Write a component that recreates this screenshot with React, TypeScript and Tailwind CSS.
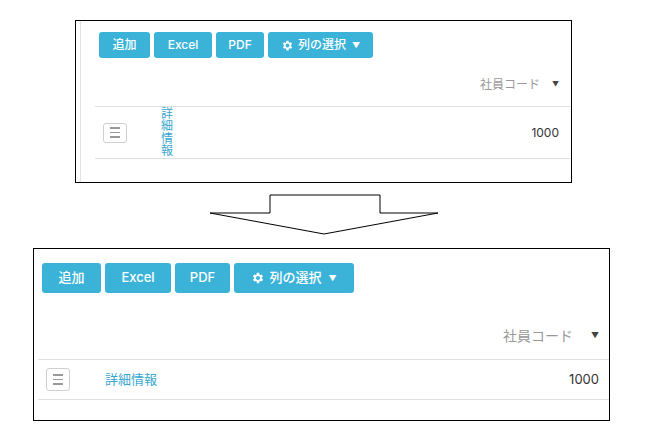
import React from "react";

const F = { fontFamily: "Inter, 'Noto Sans CJK JP', sans-serif" };

function Gear({ s }: { s: number }) {
  return (
    <svg width={s} height={s} viewBox="0 0 24 24" fill="white">
      <path d="M19.4 13a7.5 7.5 0 0 0 0-2l2.1-1.6-2-3.5-2.5 1a7.6 7.6 0 0 0-1.7-1L15 3h-4l-.4 2.9a7.6 7.6 0 0 0-1.7 1l-2.5-1-2 3.5L6.6 11a7.5 7.5 0 0 0 0 2l-2.1 1.6 2 3.5 2.5-1a7.6 7.6 0 0 0 1.7 1L11 21h4l.4-2.9a7.6 7.6 0 0 0 1.7-1l2.5 1 2-3.5zM13 15.5a3.5 3.5 0 1 1 0-7 3.5 3.5 0 0 1 0 7z" transform="translate(-1 0)" />
    </svg>
  );
}

function Btn({ children, w, h, cls }: { children: React.ReactNode; w: string; h: string; cls: string }) {
  return (
    <div className={`${w} ${h} ${cls} bg-[#3bb3d8] text-white rounded-[3px] flex items-center justify-center gap-1`}>
      {children}
    </div>
  );
}

function Menu({ w, h }: { w: string; h: string }) {
  return (
    <div className={`${w} ${h} border border-[#cfcfcf] rounded-[3px] flex flex-col items-center justify-center gap-[3px]`}>
      <div className="w-[10px] h-[1.5px] bg-[#999]" />
      <div className="w-[10px] h-[1.5px] bg-[#999]" />
      <div className="w-[10px] h-[1.5px] bg-[#999]" />
    </div>
  );
}

export default function App() {
  return (
    <div className="w-[650px] h-[444px] bg-white relative" style={F}>
      <div className="pt-[20px] pl-[75px]">
        <div className="w-[497px] h-[163px] border border-black">
          <div className="ml-[4px] h-full border-l border-[#e3e3e3] pl-[18px] pt-[11px]">
            <div className="flex gap-[4px] text-[12px] font-medium">
              <Btn w="w-[51px]" h="h-[26px]" cls="">追加</Btn>
              <Btn w="w-[58px]" h="h-[26px]" cls="">Excel</Btn>
              <Btn w="w-[48px]" h="h-[26px]" cls="">PDF</Btn>
              <Btn w="w-[105px]" h="h-[26px]" cls=""><Gear s={13} />列の選択<span className="text-[8px] ml-[2px]">▼</span></Btn>
            </div>
            <div className="flex justify-end items-center h-[42px] mt-[6px] pr-[12px] text-[12px] text-[#999]">
              <span>社員コード</span><span className="ml-[12px] text-[7px] text-[#444]">▼</span>
            </div>
            <div className="border-t border-[#e0e0e0] ml-[-4px] h-[53px] flex items-center border-b">
              <div className="ml-[8px]"><Menu w="w-[24px]" h="h-[20px]" /></div>
              <div className="ml-[34px] w-[12px] text-[12px] leading-[12.5px] text-[#3aa6d0]">詳細情報</div>
              <div className="ml-auto pr-[12px] text-[12px] text-[#333]">1000</div>
            </div>
          </div>
        </div>
      </div>
      <svg width="650" height="65" className="block">
        <polygon points="270,12 380,12 380,30 438,30 324,51 210,30 270,30" fill="white" stroke="black" strokeWidth="1" />
      </svg>
      <div className="pl-[33px]">
        <div className="w-[577px] h-[173px] border border-black pl-[8px] pt-[14px]">
          <div className="flex gap-[4px] text-[13px] font-medium">
            <Btn w="w-[59px]" h="h-[30px]" cls="">追加</Btn>
            <Btn w="w-[66px]" h="h-[30px]" cls="">Excel</Btn>
            <Btn w="w-[55px]" h="h-[30px]" cls="">PDF</Btn>
            <Btn w="w-[120px]" h="h-[30px]" cls=""><Gear s={14} />列の選択<span className="text-[8px] ml-[3px]">▼</span></Btn>
          </div>
          <div className="flex justify-end items-center h-[48px] mt-[18px] pr-[10px] text-[14px] text-[#999]">
            <span>社員コード</span><span className="ml-[18px] text-[8px] text-[#444]">▼</span>
          </div>
          <div className="border-t border-b border-[#e0e0e0] ml-[-4px] h-[41px] flex items-center">
            <div className="ml-[8px]"><Menu w="w-[24px]" h="h-[23px]" /></div>
            <div className="ml-[35px] text-[13px] text-[#3aa6d0]">詳細情報</div>
            <div className="ml-auto pr-[10px] text-[13px] text-[#333]">1000</div>
          </div>
        </div>
      </div>
    </div>
  );
}
